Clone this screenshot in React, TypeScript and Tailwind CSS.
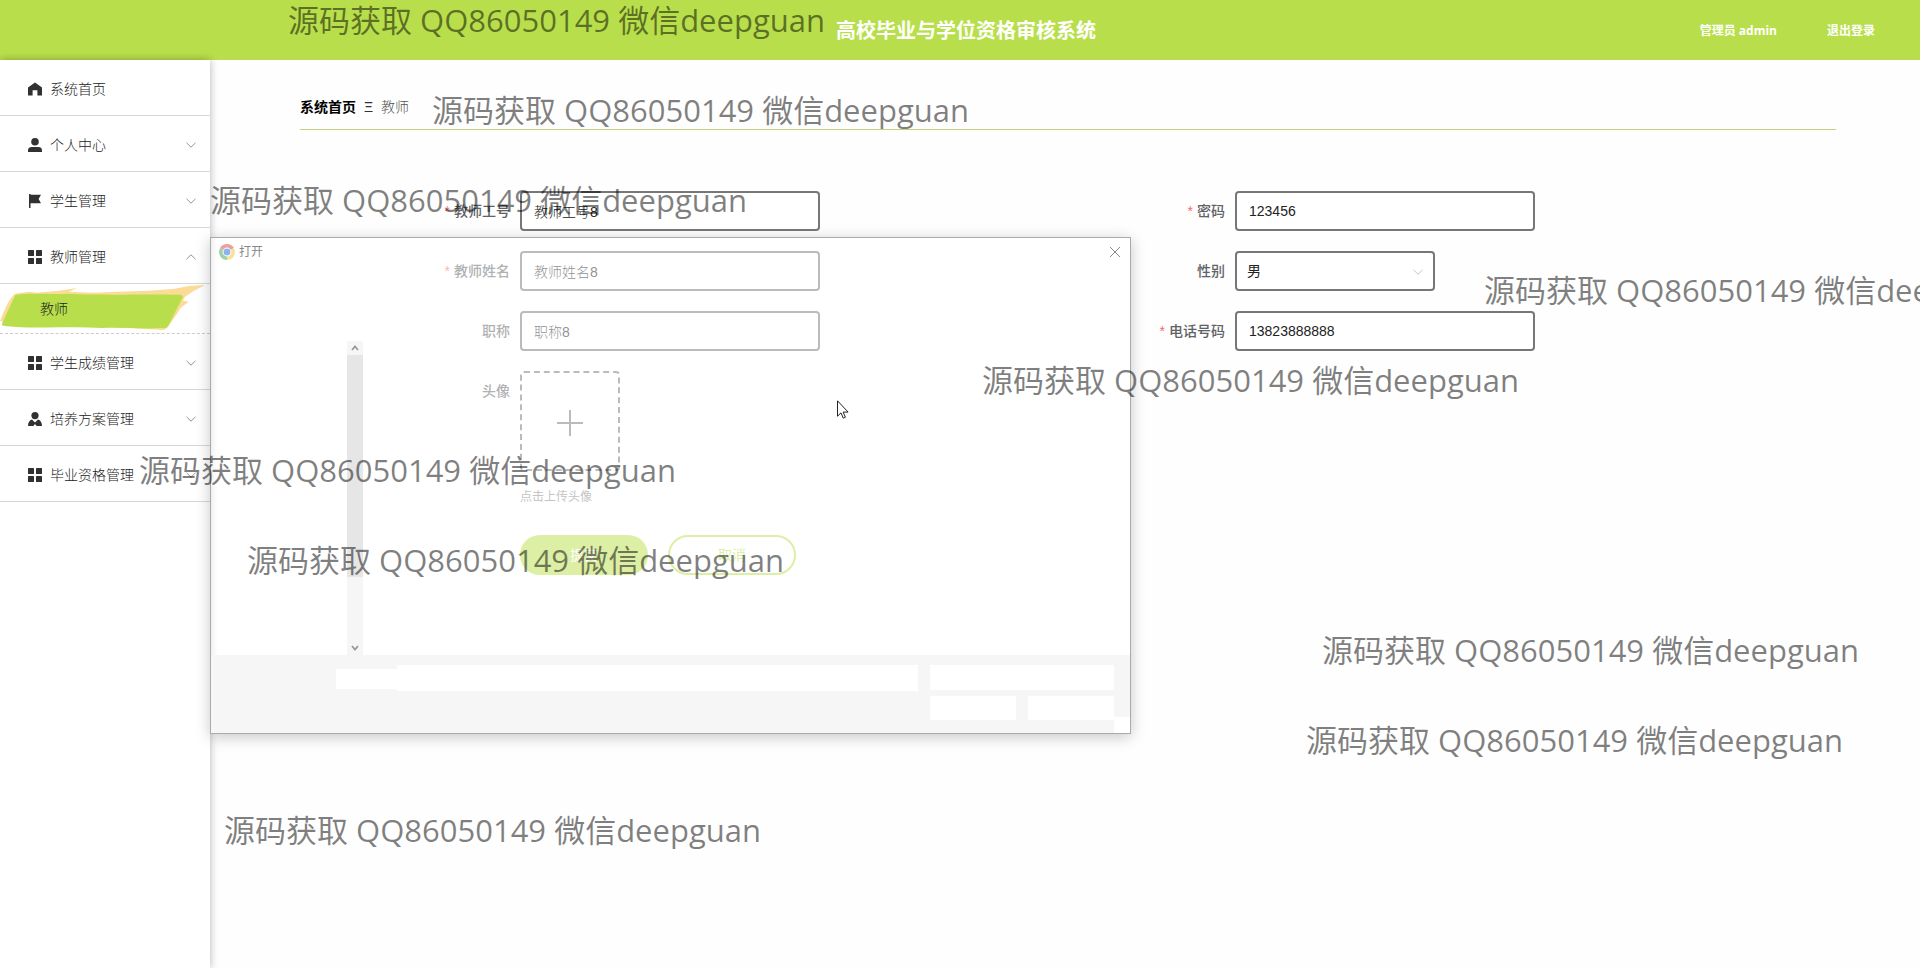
import { useState } from "react";
import { clsx } from "clsx";

interface MenuItem {
  title: string;
  icon: "home" | "user" | "flag" | "grid" | "avatar";
  expandable?: boolean;
  children?: string[];
}

const menus: MenuItem[] = [
  { title: "系统首页", icon: "home" },
  { title: "个人中心", icon: "user", expandable: true },
  { title: "学生管理", icon: "flag", expandable: true },
  { title: "教师管理", icon: "grid", expandable: true, children: ["教师"] },
  { title: "学生成绩管理", icon: "grid", expandable: true },
  { title: "培养方案管理", icon: "avatar", expandable: true },
  { title: "毕业资格管理", icon: "grid", expandable: true },
];

const watermarks = [
  "left-[288px] top-[0px]",
  "left-[432px] top-[90px]",
  "left-[210px] top-[180px]",
  "left-[1484px] top-[270px]",
  "left-[982px] top-[360px]",
  "left-[139px] top-[450px]",
  "left-[247px] top-[540px]",
  "left-[1322px] top-[630px]",
  "left-[1306px] top-[720px]",
  "left-[224px] top-[810px]",
];

function MenuIcon({ name }: { name: MenuItem["icon"] }) {
  return (
    <svg viewBox="0 0 14 14" className="h-3.5 w-3.5 shrink-0" fill="#303133" aria-hidden="true">
      {name === "home" && <path d="M7 .4 0 5.6V13.600h4.600V8.200h4.800v5.400H14V5.600Z" />}
      {name === "user" && (
        <>
          <circle cx="7" cy="3.8" r="3.8" />
          <path d="M0 14v-1.600C0 10 1.700 9 3.600 9h6.800C12.300 9 14 10 14 12.400V14Z" />
        </>
      )}
      {name === "flag" && <path d="M1 0h1.500v.8H13L10.600 5 13 9.300H2.500V14H1Z" />}
      {name === "grid" && (
        <>
          <rect x="0" y="0" width="6" height="6" rx=".6" />
          <rect x="8" y="0" width="6" height="6" rx=".6" />
          <rect x="0" y="8" width="6" height="6" rx=".6" />
          <rect x="8" y="8" width="6" height="6" rx=".6" />
        </>
      )}
      {name === "avatar" && (
        <>
          <circle cx="7" cy="3.600" r="3.600" />
          <path d="M0 14c.1-3.600 1.400-5.600 4-6.400l3 3 3-3c2.600.8 3.900 2.800 4 6.400H8.600L7 12 5.400 14Z" />
        </>
      )}
    </svg>
  );
}

function Chevron({ up = false, className }: { up?: boolean; className?: string }) {
  return (
    <svg viewBox="0 0 10 6" className={clsx("h-1.5 w-2.5", className)} fill="none" stroke="currentColor" aria-hidden="true">
      <path d={up ? "M.5 5.200 5 .8l4.500 4.400" : "M.5.8 5 5.200 9.500.8"} />
    </svg>
  );
}

function ScrollArrow({ up = false, className }: { up?: boolean; className?: string }) {
  return (
    <svg viewBox="0 0 8 6" className={clsx("h-1.5 w-2 shrink-0", className)} fill="none" stroke="#999" strokeWidth="1.800" aria-hidden="true">
      <path d={up ? "M1 5 4 1.500 7 5" : "M1 1 4 4.500 7 1"} />
    </svg>
  );
}

function BrushStroke() {
  return (
    <svg viewBox="0 0 210 50" className="absolute inset-0 h-full w-full" preserveAspectRatio="none" aria-hidden="true">
      <path
        d="M0 38C4 28 8 16 15 10l14-2 8 1 22-2 18-3-8 4 24 1 26-1 30-1 24-2 16-3 16-1-11 6-9 6-2 4 6 1-8 6-5 8-8 12-4 3Z"
        fill="#fbdc97"
      />
      <path
        d="M17 11c12-2 34 0 50-1 40 2 80 0 111 1 5 0 6 1 4 4l-13 26c-2 4-3 4-7 4-20 1-40-1-60 0-30-2-60 1-95-2-5 0-6-1-4-5L14 14c1-2 1-3 3-3Z"
        fill="#b8df4b"
      />
    </svg>
  );
}

function Sidebar() {
  return (
    <nav className="z-10 w-[210px] shrink-0 bg-white shadow-[0_0_8px_rgba(0,0,0,0.3)]">
      <ul>
        {menus.map((menu) => (
          <li key={menu.title}>
            <button className="flex h-14 w-full items-center gap-2 border-b border-[#d8d8d8] pt-0.5 pr-3.5 pl-7 text-sm font-light text-[#222]">
              <MenuIcon name={menu.icon} />
              <span>{menu.title}</span>
              {menu.expandable && <Chevron up={!!menu.children} className="ml-auto text-[#909399]" />}
            </button>
            {menu.children?.map((child) => (
              <a key={child} href="#" className="relative flex h-[50px] items-center border-b border-dashed border-[#ccc] pl-10 text-sm font-light text-[#222]">
                <BrushStroke />
                <span className="relative">{child}</span>
              </a>
            ))}
          </li>
        ))}
      </ul>
    </nav>
  );
}

interface FieldProps {
  id: string;
  label: string;
  required?: boolean;
  children: React.ReactNode;
}

function Field({ id, label, required, children }: FieldProps) {
  return (
    <div className="flex items-start">
      <label htmlFor={id} className="w-[180px] shrink-0 pr-2.5 text-right text-sm leading-10 font-medium text-[#606266]">
        {required && <span className="mr-1 text-[#f56c6c]">*</span>}
        {label}
      </label>
      {children}
    </div>
  );
}

const inputClass = "h-10 w-[300px] rounded border-2 border-[#777] bg-white px-3 text-sm font-light text-[#222] outline-none";

function TeacherForm() {
  const [form, setForm] = useState({
    jobNo: "教师工号8",
    password: "123456",
    name: "教师姓名8",
    sex: "男",
    title: "职称8",
    phone: "13823888888",
  });

  const bind = (key: keyof typeof form) => ({
    id: key,
    value: form[key],
    onChange: (e: React.ChangeEvent<HTMLInputElement | HTMLSelectElement>) => setForm({ ...form, [key]: e.target.value }),
  });

  return (
    <form className="mt-[61px] pr-[66px] pl-10">
      <div className="grid grid-cols-2 gap-y-5">
        <Field id="jobNo" label="教师工号" required>
          <input className={inputClass} {...bind("jobNo")} />
        </Field>
        <Field id="password" label="密码" required>
          <input className={inputClass} {...bind("password")} />
        </Field>
        <Field id="name" label="教师姓名" required>
          <input className={inputClass} {...bind("name")} />
        </Field>
        <Field id="sex" label="性别">
          <div className="relative">
            <select className="h-10 w-[200px] appearance-none rounded border-2 border-[#777] bg-white px-2.5 text-sm text-[#222]" {...bind("sex")}>
              <option>男</option>
              <option>女</option>
            </select>
            <Chevron className="pointer-events-none absolute top-[18px] right-3 text-[#c0c4cc]" />
          </div>
        </Field>
        <Field id="title" label="职称">
          <input className={inputClass} {...bind("title")} />
        </Field>
        <Field id="phone" label="电话号码" required>
          <input className={inputClass} {...bind("phone")} />
        </Field>
        <Field id="avatar" label="头像">
          <div>
            <button id="avatar" type="button" aria-label="上传" className="flex h-[100px] w-[100px] items-center justify-center rounded border-2 border-dashed border-[#777] pt-1">
              <svg viewBox="0 0 26 26" className="h-[26px] w-[26px]" stroke="#777" strokeWidth="2" aria-hidden="true">
                <path d="M13 0v26M0 13h26" />
              </svg>
            </button>
            <p className="mt-4 text-xs leading-5 text-[#888]">点击上传头像</p>
          </div>
        </Field>
      </div>
      <div className="mt-7 flex gap-5 pl-[180px]">
        <button type="button" className="h-10 w-32 rounded-full bg-[#b8df4b] text-sm text-white">提交</button>
        <button type="button" className="h-10 w-32 rounded-full border-2 border-[#b8df4b] bg-white text-sm text-[#b8df4b]">取消</button>
      </div>
    </form>
  );
}

function ChromeLogo() {
  return (
    <svg viewBox="0 0 16 16" className="h-4 w-4" aria-hidden="true">
      <path d="M8 8 1.100 4A8 8 0 0 1 14.900 4Z" fill="#eda09b" />
      <path d="M8 8 14.900 4A8 8 0 0 1 8 16Z" fill="#f8e29a" />
      <path d="M8 8v8A8 8 0 0 1 1.100 4Z" fill="#9fd0aa" />
      <circle cx="8" cy="8" r="4.400" fill="#fff" />
      <circle cx="8" cy="8" r="3.400" fill="#8ab4f0" />
    </svg>
  );
}

// File picker, half faded in above the form
function OpenDialog() {
  return (
    <div
      role="dialog"
      aria-label="打开"
      className="absolute top-[237px] left-[210px] z-20 flex h-[497px] w-[921px] flex-col border border-[#aaa] bg-white/50 shadow-[0_3px_14px_rgba(0,0,0,0.22)]"
    >
      <div className="flex h-7 items-center gap-1 px-2 text-xs text-[#888]">
        <ChromeLogo />
        <span>打开</span>
        <button type="button" aria-label="关闭" className="ml-auto p-0.5 text-[#888]">
          <svg viewBox="0 0 10 10" className="h-2.5 w-2.5" stroke="currentColor">
            <path d="M0 0 10 10M10 0 0 10" />
          </svg>
        </button>
      </div>
      <div className="mt-[75px] ml-[136px] flex w-4 flex-1 flex-col items-center bg-[#f6f6f6] py-1">
        <ScrollArrow up />
        <div className="mt-1 h-[222px] w-full bg-[#e6e6e6]" />
        <ScrollArrow className="mt-auto" />
      </div>
      <div className="flex h-[78px] justify-end bg-[#f6f6f6] pt-2.5">
        <div className="mt-1 h-5 w-[61px] bg-white" />
        <div className="h-[26px] w-[521px] bg-white" />
        <div className="ml-3 grid h-[55px] w-[184px] grid-cols-2 gap-x-3 gap-y-1.5">
          <div className="col-span-2 bg-white" />
          <div className="bg-white" />
          <div className="bg-white" />
        </div>
        <div className="h-4 w-4 self-end bg-white" />
      </div>
    </div>
  );
}

export default function App() {
  return (
    <div className="relative flex min-h-screen flex-col overflow-hidden bg-[#fefefe] font-['Liberation_Sans','Noto_Sans_CJK_SC',sans-serif]">
      <header className="grid h-[60px] grid-cols-[1fr_auto_1fr] items-center bg-[#b8df4b] pt-0.5 pl-3 font-['Open_Sans','Noto_Sans_CJK_SC',sans-serif] font-bold text-white">
        <h1 className="col-start-2 text-xl">高校毕业与学位资格审核系统</h1>
        <div className="flex justify-end gap-[50px] pr-[45px] text-xs">
          <span>管理员 admin</span>
          <button>退出登录</button>
        </div>
      </header>

      <div className="flex flex-1">
        <Sidebar />
        <main className="flex-1 pr-[84px] pl-[90px]">
          <div className="flex h-[70px] items-end gap-2 border-b border-[#c3d480] pb-3 text-sm leading-5">
            <a href="#" className="font-bold text-black">系统首页</a>
            <span className="text-[#303133]">Ξ</span>
            <span className="font-light text-[#555]">教师</span>
          </div>
          <TeacherForm />
        </main>
      </div>

      <OpenDialog />

      <svg viewBox="0 0 12 19" className="absolute top-[400px] left-[837px] z-30 h-[19px] w-3" fill="#fff" stroke="#222" aria-hidden="true">
        <path d="M.5.800v15.400l3.500-3.300 2.300 5.300 2.100-1-2.300-5.100h5Z" />
      </svg>

      <div className="pointer-events-none absolute inset-0 z-40 overflow-hidden font-['Open_Sans','Noto_Sans_CJK_SC',sans-serif]">
        {watermarks.map((place) => (
          <span key={place} className={clsx("absolute text-[31px] leading-10 whitespace-nowrap text-black/50", place)}>
            源码获取 QQ86050149 微信deepguan
          </span>
        ))}
      </div>
    </div>
  );
}
